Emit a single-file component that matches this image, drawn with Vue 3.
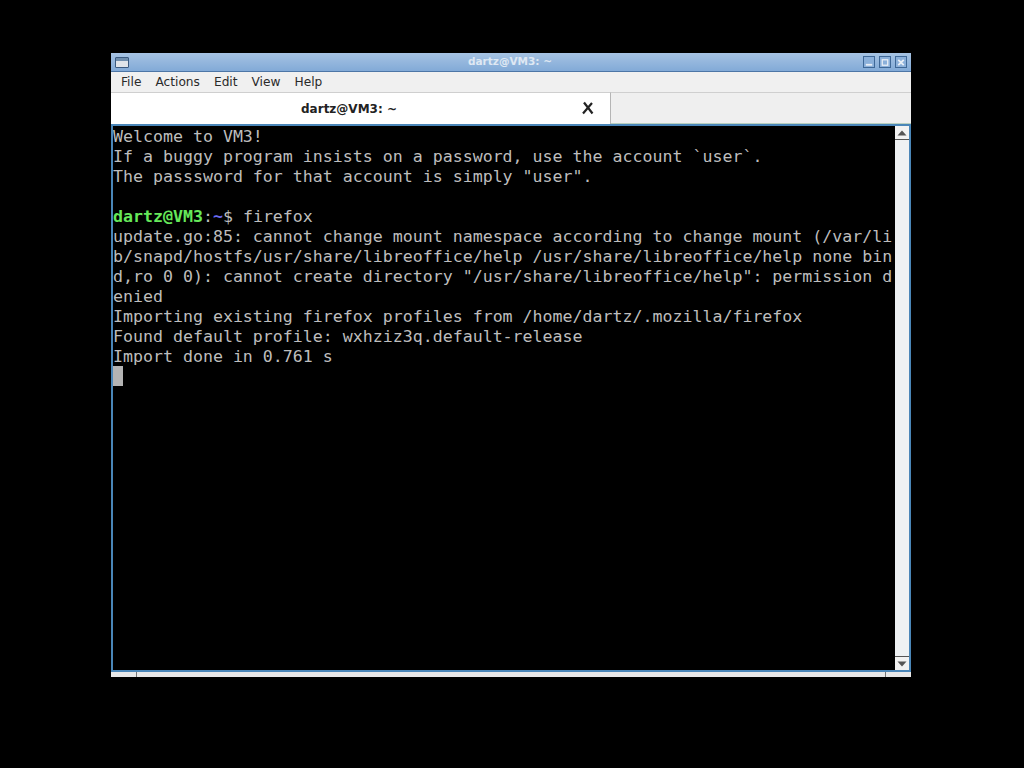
<script setup>
const menus = ['File', 'Actions', 'Edit', 'View', 'Help']
const lines = [
  'Welcome to VM3!',
  'If a buggy program insists on a password, use the account `user`.',
  'The passsword for that account is simply "user".',
  '',
]
const after = [
  'update.go:85: cannot change mount namespace according to change mount (/var/li',
  'b/snapd/hostfs/usr/share/libreoffice/help /usr/share/libreoffice/help none bin',
  'd,ro 0 0): cannot create directory "/usr/share/libreoffice/help": permission d',
  'enied',
  'Importing existing firefox profiles from /home/dartz/.mozilla/firefox',
  'Found default profile: wxhziz3q.default-release',
  'Import done in 0.761 s',
]
</script>

<template>
  <div class="desktop">
    <div class="window">
      <header class="titlebar">
        <span class="appicon"></span>
        <span class="title">dartz@VM3: ~</span>
        <div class="wm">
          <span class="wmbtn"><svg width="11" height="11" viewBox="0 0 11 11"><rect x="2" y="7" width="7" height="2" fill="#e8eef6" /></svg></span>
          <span class="wmbtn"><svg width="11" height="11" viewBox="0 0 11 11"><rect x="2.5" y="2.5" width="6" height="6" fill="none" stroke="#e8eef6" stroke-width="1.4" /></svg></span>
          <span class="wmbtn"><svg width="11" height="11" viewBox="0 0 11 11"><path d="M2.5 2.5L8.5 8.5M8.5 2.5L2.5 8.5" stroke="#e8eef6" stroke-width="2" /></svg></span>
        </div>
      </header>
      <nav class="menubar">
        <span v-for="m in menus" :key="m" class="menu">{{ m }}</span>
      </nav>
      <div class="tabbar">
        <div class="tab">
          <span class="tabtitle">dartz@VM3: ~</span>
          <svg class="tabclose" width="14" height="14" viewBox="0 0 14 14"><path d="M3 1.5L11.5 12.5M11 2L2 12.5" stroke="#222" stroke-width="2.2" /></svg>
        </div>
        <div class="tabrest"></div>
      </div>
      <div class="termwrap">
        <div class="term">
          <div v-for="(l, i) in lines" :key="i" class="line">{{ l }}</div>
          <div class="line"><span class="green">dartz@VM3</span>:<span class="blue">~</span>$ firefox</div>
          <div v-for="(l, i) in after" :key="'a' + i" class="line">{{ l }}</div>
          <div class="line cursorline"><span class="cursor"></span></div>
        </div>
        <div class="scrollbar">
          <span class="arrow"><svg width="10" height="6" viewBox="0 0 10 6"><path d="M5 0.5L9.5 5.5H0.5Z" fill="#555" /></svg></span>
          <span class="trough"></span>
          <span class="arrow bottom"><svg width="10" height="6" viewBox="0 0 10 6"><path d="M5 5.5L9.5 0.5H0.5Z" fill="#555" /></svg></span>
        </div>
      </div>
      <div class="grip">
        <span class="gripcell left"></span>
        <span class="gripcell mid"></span>
        <span class="gripcell right"></span>
      </div>
    </div>
  </div>
</template>

<style scoped>
.desktop {
  width: 1024px;
  height: 768px;
  background: #000;
  padding: 53px 113px 0 111px;
  box-sizing: border-box;
  overflow: hidden;
}
.window {
  width: 800px;
  height: 624px;
  display: flex;
  flex-direction: column;
  background: #efefef;
}
.titlebar {
  height: 19px;
  flex: none;
  display: flex;
  align-items: center;
  position: relative;
  background: linear-gradient(#a6c3e3, #82aad7);
  border-bottom: 1px solid #4d76a6;
  box-sizing: border-box;
  padding: 0 4px;
}
.appicon {
  width: 14px;
  height: 11px;
  margin-top: 1px;
  border: 1px solid #3a5a80;
  border-radius: 1px;
  background: linear-gradient(#6f8eae 0 3px, #dfe4ea 3px);
  box-sizing: border-box;
}
.title {
  position: absolute;
  left: 0;
  right: 2px;
  padding-bottom: 2px;
  text-align: center;
  font: bold 10.5px "DejaVu Sans", sans-serif;
  color: #dfe8f3;
}
.wm {
  margin-left: auto;
  display: flex;
  gap: 4px;
}
.wmbtn {
  width: 12px;
  height: 12px;
  display: flex;
  align-items: center;
  justify-content: center;
  border: 1px solid #3f6897;
  background: #8bb0da;
  box-sizing: border-box;
}
.menubar {
  height: 20px;
  flex: none;
  display: flex;
  align-items: center;
  gap: 14px;
  padding: 0 0 0 10px;
  box-sizing: border-box;
  font: 12.2px "DejaVu Sans", sans-serif;
  color: #2a2a2a;
  background: #f0f0f0;
}
.tabbar {
  height: 32px;
  flex: none;
  display: flex;
  box-sizing: border-box;
  background: #efefef;
}
.tab {
  width: 500px;
  flex: none;
  display: flex;
  align-items: center;
  position: relative;
  background: #fff;
  border-top: 1px solid #cfcfcf;
  border-right: 1px solid #b5b5b5;
  box-sizing: border-box;
}
.tabtitle {
  width: 476px;
  text-align: center;
  font: bold 12px "DejaVu Sans", sans-serif;
  color: #222;
}
.tabclose {
  position: absolute;
  left: 470px;
  top: 8px;
}
.tabrest {
  flex: 1;
  border-top: 1px solid #cfcfcf;
  border-bottom: 1px solid #b9cfc0;
}
.termwrap {
  flex: 1;
  min-height: 0;
  display: flex;
  background: #000;
  border: 2px solid #4a86b8;
  box-sizing: border-box;
}
.term {
  flex: 1;
  min-width: 0;
  overflow: hidden;
  padding-top: 1px;
  font-family: "DejaVu Sans Mono", monospace;
  font-size: 16.6px;
  line-height: 20px;
  color: #bdbdbd;
}
.line {
  height: 20px;
  white-space: pre;
}
.cursorline {
  display: flex;
  align-items: flex-start;
}
.green {
  color: #66e95a;
  font-weight: bold;
}
.blue {
  color: #6a6af0;
  font-weight: bold;
}
.cursor {
  width: 10px;
  height: 20px;
  margin-top: -1px;
  background: #b4b4b4;
}
.scrollbar {
  width: 14px;
  flex: none;
  display: flex;
  flex-direction: column;
  background: #eef1f3;
}
.arrow {
  height: 14px;
  flex: none;
  display: flex;
  align-items: center;
  justify-content: center;
  border-bottom: 1px solid #555;
  box-sizing: border-box;
  background: #f2f2f2;
}
.arrow.bottom {
  border-bottom: 0;
  border-top: 1px solid #555;
}
.trough {
  flex: 1;
}
.grip {
  height: 5px;
  flex: none;
  display: flex;
  background: #e8e8e8;
}
.gripcell {
  border-right: 1px solid #777;
}
.left {
  width: 25px;
}
.mid {
  flex: 1;
}
.right {
  width: 25px;
  border-right: 0;
}
</style>
